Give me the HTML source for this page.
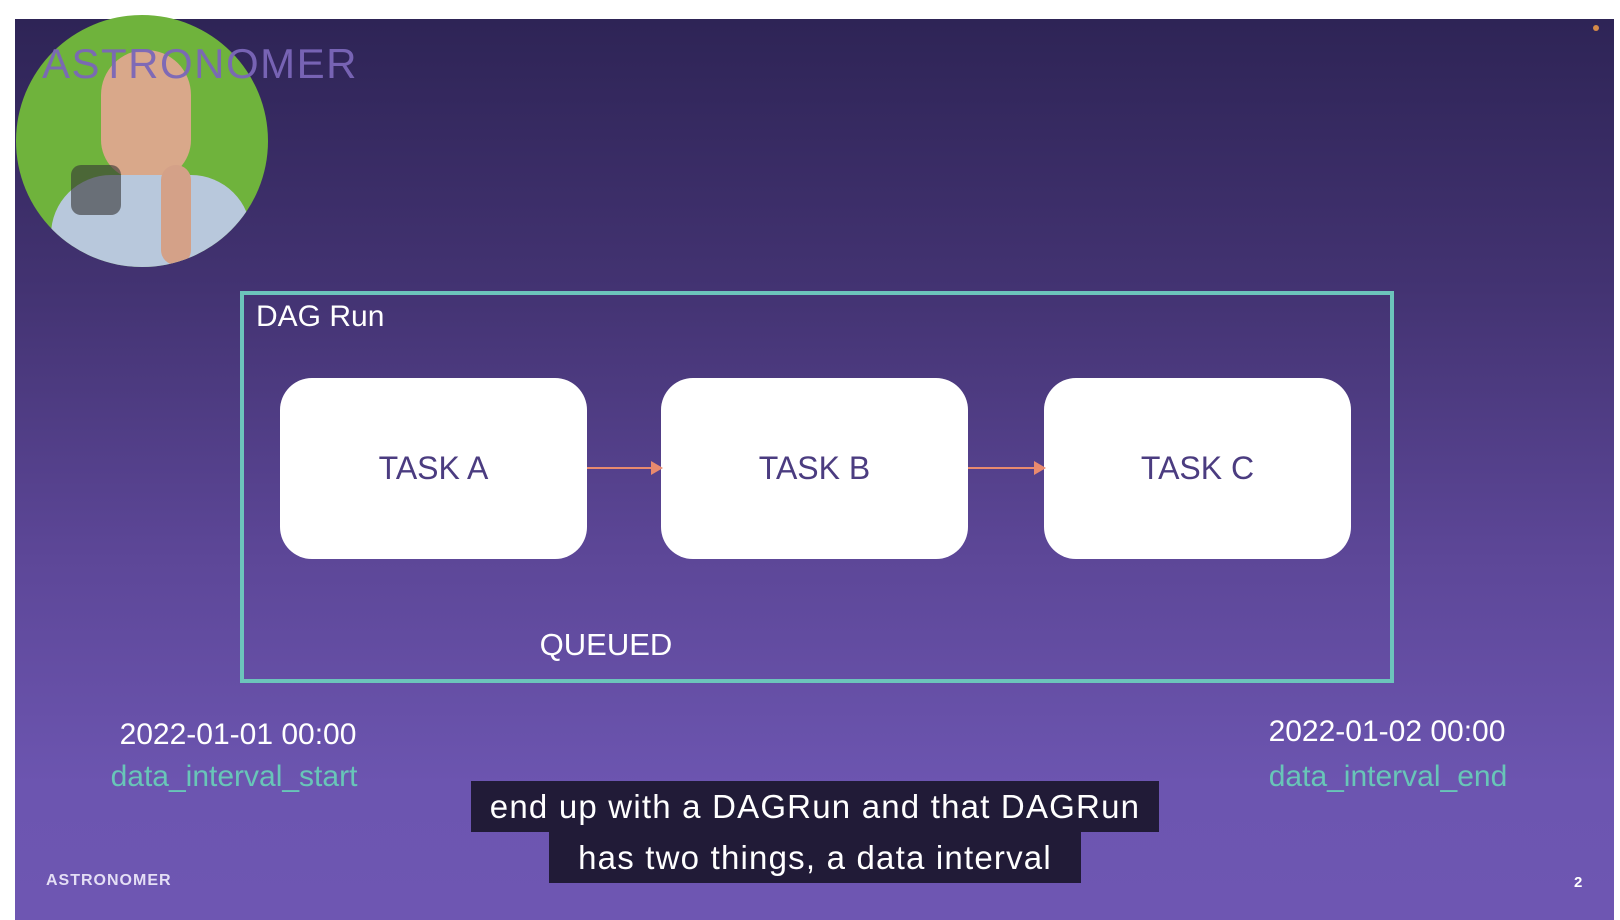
<!DOCTYPE html>
<html><head><meta charset="utf-8"><style>
html,body{margin:0;padding:0;width:1620px;height:920px;background:#fff;overflow:hidden;font-family:"Liberation Sans",Arial,sans-serif}
#slide{position:absolute;left:15px;top:19px;width:1599px;height:901px;background:linear-gradient(#2e2456 0%,#433372 30%,#5d4798 60%,#6c55b0 85%,#6e56b2 100%);overflow:hidden}
.abs{position:absolute}
.task{position:absolute;top:378px;height:181px;background:#fff;border-radius:32px;color:#4b3c80;font-size:32px;display:flex;align-items:center;justify-content:center}
.arrow{position:absolute;top:467px;height:2px;background:#e98a6e}
.arrow:after{content:"";position:absolute;right:-2px;top:-6px;border-left:12px solid #e98a6e;border-top:7px solid transparent;border-bottom:7px solid transparent}
.date{position:absolute;color:#fff;font-size:30px;text-align:center;width:400px}
.lbl{position:absolute;color:#68c6b8;font-size:30px;text-align:center;width:400px}
.sub{position:absolute;background:#211b37;color:#fff;font-size:33px;letter-spacing:1.2px;text-align:center;line-height:51px;white-space:nowrap}
</style></head><body>
<div id="slide"></div>
<div class="abs" style="left:1593px;top:25px;width:6px;height:6px;border-radius:50%;background:#d58a48"></div>
<div class="abs" style="left:16px;top:15px;width:252px;height:252px;border-radius:50%;overflow:hidden;background:#6fb33c">
  <div class="abs" style="left:85px;top:35px;width:90px;height:130px;border-radius:45px 45px 40px 40px;background:#d9a88a"></div>
  <div class="abs" style="left:60px;top:160px;width:200px;height:120px;border-radius:60px 60px 0 0;background:#b8c8dc;transform:translateX(-25px)"></div>
  <div class="abs" style="left:55px;top:150px;width:50px;height:50px;border-radius:10px;background:#333;opacity:.6"></div>
  <div class="abs" style="left:145px;top:150px;width:30px;height:100px;border-radius:15px;background:#d4a188"></div>
</div>
<div class="abs" style="left:42px;top:40px;font-size:42px;color:#7b67b9;letter-spacing:1.5px;opacity:.95">ASTRONOMER</div>
<div class="abs" style="left:240px;top:291px;width:1146px;height:384px;border:4px solid #6cc4bb"></div>
<div class="abs" style="left:256px;top:300px;font-size:30px;color:#fff">DAG Run</div>
<div class="task" style="left:280px;width:307px">TASK A</div>
<div class="task" style="left:661px;width:307px">TASK B</div>
<div class="task" style="left:1044px;width:307px">TASK C</div>
<div class="arrow" style="left:587px;width:74px"></div>
<div class="arrow" style="left:968px;width:76px"></div>
<div class="abs" style="left:506px;top:627px;width:200px;text-align:center;font-size:31px;color:#fff">QUEUED</div>
<div class="date" style="left:38px;top:718px">2022-01-01 00:00</div>
<div class="lbl" style="left:34px;top:760px">data_interval_start</div>
<div class="date" style="left:1187px;top:715px">2022-01-02 00:00</div>
<div class="lbl" style="left:1188px;top:760px">data_interval_end</div>
<div class="sub" style="left:471px;top:781px;width:688px">end up with a DAGRun and that DAGRun</div>
<div class="sub" style="left:549px;top:832px;width:532px">has two things, a data interval</div>
<div class="abs" style="left:46px;top:872px;font-size:16px;color:#e4def5;letter-spacing:1px;font-weight:bold">ASTRONOMER</div>
<div class="abs" style="left:1574px;top:874px;font-size:15px;color:#fff;font-weight:bold">2</div>
</body></html>
